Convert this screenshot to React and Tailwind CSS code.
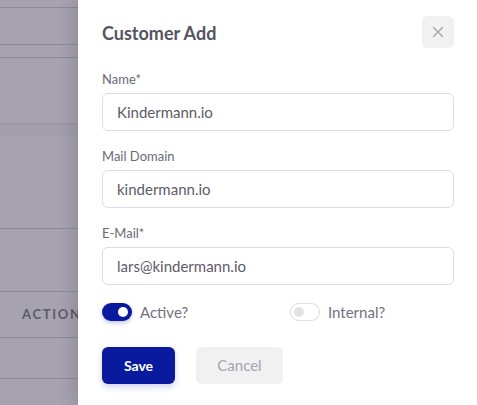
import React from 'react';

const fields = [
  { label: 'Name*', value: 'Kindermann.io' },
  { label: 'Mail Domain', value: 'kindermann.io' },
  { label: 'E-Mail*', value: 'lars@kindermann.io' },
];

const Toggle = ({ on, label }) => (
  <div className="flex items-center gap-2">
    <div
      className={
        on
          ? 'w-[30px] h-[18px] rounded-full bg-[#0a1a9f] flex items-center justify-end px-[4px] shadow-[0_2px_4px_rgba(10,26,159,0.25)]'
          : 'w-[30px] h-[18px] rounded-full bg-white border border-[#dedde3] flex items-center justify-start px-[3px]'
      }
    >
      <div className={on ? 'w-[10px] h-[10px] rounded-full bg-white' : 'w-[10px] h-[10px] rounded-full bg-[#e3e2e7]'} />
    </div>
    <span className="text-[15px] leading-[22px] text-[#72717e]">{label}</span>
  </div>
);

export default function App() {
  return (
    <div className="relative w-[477px] h-[405px] overflow-hidden bg-[#a6a2ae] font-['Lato',sans-serif]">
      {/* Table behind the overlay */}
      <div className="flex flex-col">
        <div className="h-[8px] border-b border-[#8e8a99]" />
        <div className="h-[37px] border-b border-[#8e8a99]" />
        <div className="h-[13px] border-b border-[#8e8a99]" />
        <div className="h-[171px] border-b border-[#8e8a99] pt-[65px]">
          <div className="h-[14px] bg-[#a29eab] border-t-2 border-[#9c98a6]" />
        </div>
        <div className="h-[63px] border-b border-[#8e8a99]" />
        <div className="h-[46px] border-b border-[#8e8a99] flex items-center pl-[22px]">
          <span className="text-[13px] font-bold tracking-[0.13em] text-[#5d596b]">ACTIONS</span>
        </div>
        <div className="h-[41px] border-b border-[#8e8a99]" />
      </div>

      {/* Drawer */}
      <div className="absolute top-0 right-0 bottom-0 w-[399px] bg-white shadow-[-6px_0_14px_rgba(60,55,75,0.18)] pl-[24px] pr-[23px]">
        <div className="flex items-center justify-between pt-[16px]">
          <h2 className="text-[18px] font-bold text-[#55545f] pt-[2px]">Customer Add</h2>
          <button className="w-[32px] h-[32px] rounded-md bg-[#f1f1f2] flex items-center justify-center">
            <svg width="12" height="12" viewBox="0 0 12 12" fill="none" stroke="#a3a2ab" strokeWidth="1.3" strokeLinecap="round">
              <path d="M1.5 1.5l9 9M10.5 1.5l-9 9" />
            </svg>
          </button>
        </div>

        <div className="flex flex-col gap-[17px] mt-[23px]">
          {fields.map((f) => (
            <div key={f.label} className="flex flex-col gap-[6px]">
              <label className="text-[13px] leading-[16px] text-[#6b6a76]">{f.label}</label>
              <div className="h-[38px] rounded-md border border-[#dddce2] flex items-center px-[14px] text-[15px] text-[#5c5b68]">
                {f.value}
              </div>
            </div>
          ))}
        </div>

        <div className="flex items-center mt-[16px]">
          <div className="w-[188px]">
            <Toggle on label="Active?" />
          </div>
          <Toggle on={false} label="Internal?" />
        </div>

        <div className="flex items-center gap-[21px] mt-[24px]">
          <button className="w-[73px] h-[37px] rounded-md bg-[#0a1a9f] text-white text-[14px] font-bold shadow-[0_3px_6px_rgba(10,26,159,0.2)]">
            Save
          </button>
          <button className="w-[87px] h-[37px] rounded-md bg-[#f1f1f2] text-[#a4a3ad] text-[15px]">
            Cancel
          </button>
        </div>
      </div>
    </div>
  );
}
